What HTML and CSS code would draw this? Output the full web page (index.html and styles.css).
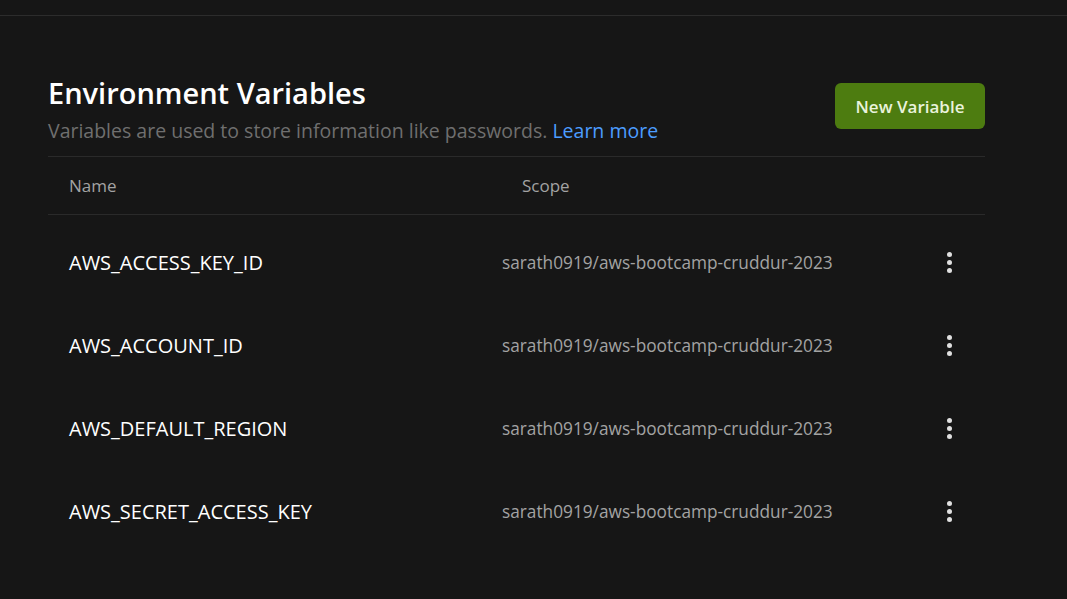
FILE: index.html
```html
<!DOCTYPE html>
<html>
<head>
<meta charset="utf-8">
<link rel="stylesheet" href="styles.css">
</head>
<body>
<div class="topbar"></div>
<main class="page">
  <header class="head">
    <div class="head-text">
      <h1 class="title">Environment Variables</h1>
      <p class="subtitle">Variables are used to store information like passwords. <a class="link" href="#">Learn more</a></p>
    </div>
    <button class="btn">New Variable</button>
  </header>
  <div class="table">
    <div class="thead">
      <span class="th th-name">Name</span>
      <span class="th th-scope">Scope</span>
    </div>
    <div class="tbody">
      <div class="row">
        <span class="name">AWS_ACCESS_KEY_ID</span>
        <span class="scope">sarath0919/aws-bootcamp-cruddur-2023</span>
        <span class="kebab"><i></i><i></i><i></i></span>
      </div>
      <div class="row">
        <span class="name">AWS_ACCOUNT_ID</span>
        <span class="scope">sarath0919/aws-bootcamp-cruddur-2023</span>
        <span class="kebab"><i></i><i></i><i></i></span>
      </div>
      <div class="row">
        <span class="name">AWS_DEFAULT_REGION</span>
        <span class="scope">sarath0919/aws-bootcamp-cruddur-2023</span>
        <span class="kebab"><i></i><i></i><i></i></span>
      </div>
      <div class="row">
        <span class="name">AWS_SECRET_ACCESS_KEY</span>
        <span class="scope">sarath0919/aws-bootcamp-cruddur-2023</span>
        <span class="kebab"><i></i><i></i><i></i></span>
      </div>
    </div>
  </div>
</main>
</body>
</html>
```
FILE: styles.css
```css
* { box-sizing: border-box; }
html, body { margin: 0; padding: 0; }
body {
  background: #161616;
  font-family: "Open Sans", "Noto Sans", sans-serif;
  color: #f2f2f2;
  height: 599px;
  overflow: hidden;
}
.topbar {
  height: 16px;
  border-bottom: 1px solid #2c2c2c;
}
.page {
  width: 937px;
  margin-left: 48px;
  padding-top: 57px;
}
.head {
  display: flex;
  justify-content: space-between;
  align-items: flex-start;
  padding-bottom: 12px;
  border-bottom: 1px solid #2a2a2a;
}
.title {
  margin: 0;
  font-size: 29px;
  font-weight: 600;
  line-height: 40px;
  color: #ffffff;
}
.subtitle {
  margin: 5px 0 0;
  font-size: 19.5px;
  line-height: 26px;
  color: #6f6f6f;
}
.link {
  color: #4c9dff;
  text-decoration: none;
}
.btn {
  margin-top: 10px;
  width: 150px;
  height: 46px;
  border: none;
  border-radius: 6px;
  background: #4d7c10;
  color: #eaf3dc;
  font-family: inherit;
  font-size: 17px;
  font-weight: 600;
}
.thead {
  display: flex;
  align-items: center;
  height: 58px;
  border-bottom: 1px solid #2a2a2a;
  font-size: 17px;
  color: #a3a3a3;
}
.th-name { padding-left: 21px; width: 474px; }
.tbody { padding-top: 6px; }
.row {
  display: flex;
  align-items: center;
  height: 83px;
}
.name {
  padding-left: 21px;
  width: 454px;
  font-size: 20px;
  color: #ffffff;
}
.scope {
  flex: 1;
  font-size: 17.25px;
  color: #a3a3a3;
}
.kebab {
  width: 10px;
  margin-right: 31px;
  display: flex;
  flex-direction: column;
  align-items: center;
  gap: 3px;
}
.kebab i {
  display: block;
  width: 5px;
  height: 5px;
  border-radius: 50%;
  background: #e0e0e0;
}
```
